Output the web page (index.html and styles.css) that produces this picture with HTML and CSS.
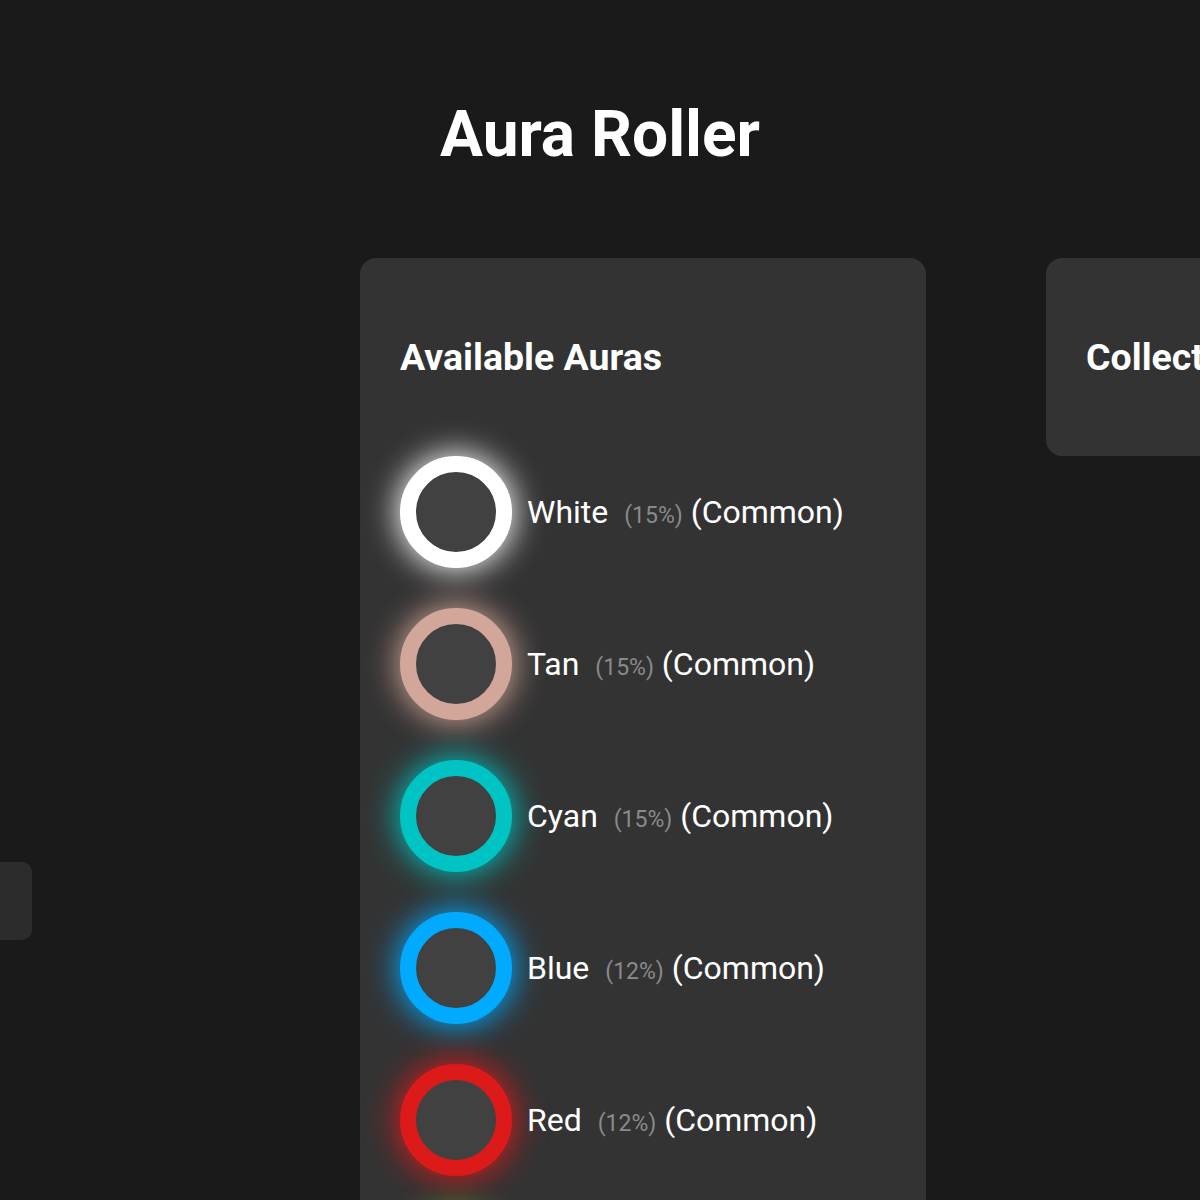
FILE: index.html
```html
<!DOCTYPE html>
<html lang="en">
<head>
    <meta charset="UTF-8">
    <meta name="viewport" content="width=device-width, initial-scale=1.0">
    <title>Aura Roller</title>
    <link rel="stylesheet" href="styles.css">
</head>
<body>
    <h1 class="title">Aura Roller</h1>
    <div class="layout">
        <div class="side">
            <div class="roll-panel"></div>
        </div>
        <div class="card auras">
            <h2>Available Auras</h2>
            <div class="aura-list">
                <div class="aura">
                    <div class="ring" style="--aura: #ffffff"></div>
                    <span class="label">White <span class="chance">(15%)</span> (Common)</span>
                </div>
                <div class="aura">
                    <div class="ring" style="--aura: #d2a699"></div>
                    <span class="label">Tan <span class="chance">(15%)</span> (Common)</span>
                </div>
                <div class="aura">
                    <div class="ring" style="--aura: #00c4c4"></div>
                    <span class="label">Cyan <span class="chance">(15%)</span> (Common)</span>
                </div>
                <div class="aura">
                    <div class="ring" style="--aura: #00aaff"></div>
                    <span class="label">Blue <span class="chance">(12%)</span> (Common)</span>
                </div>
                <div class="aura">
                    <div class="ring" style="--aura: #dd1a1a"></div>
                    <span class="label">Red <span class="chance">(12%)</span> (Common)</span>
                </div>
                <div class="aura">
                    <div class="ring" style="--aura: #7cc83a"></div>
                    <span class="label">Green <span class="chance">(10%)</span> (Common)</span>
                </div>
            </div>
        </div>
        <div class="card collection">
            <h2>Collection</h2>
        </div>
    </div>
</body>
</html>
```

FILE: styles.css
```css
body {
    font-family: Roboto, "Noto Sans", Arial, sans-serif;
    margin: 0;
    padding: 0;
    background-color: #1a1a1a;
    color: #fff;
    overflow: hidden;
}
.title {
    font-size: 64px;
    font-weight: bold;
    text-align: center;
    margin: 99px 0 0;
    line-height: 72px;
}
.layout {
    display: flex;
    align-items: flex-start;
    margin-top: 87px;
}
.side {
    width: 360px;
    flex-shrink: 0;
}
.roll-panel {
    width: 120px;
    height: 78px;
    margin-left: -88px;
    margin-top: 604px;
    background-color: #2c2c2c;
    border-radius: 10px;
}
.card {
    background-color: #333;
    border-radius: 16px;
    padding: 40px;
    box-sizing: border-box;
    flex-shrink: 0;
}
.card h2 {
    font-size: 37.5px;
    font-weight: bold;
    margin: 39px 0 39px;
    line-height: 40px;
}
.auras {
    width: 566px;
}
.collection {
    width: 420px;
    margin-left: 120px;
}
.aura-list {
    display: flex;
    flex-direction: column;
    gap: 40px;
    padding-top: 40px;
}
.aura {
    display: flex;
    align-items: center;
    font-size: 32px;
}
.ring {
    width: 80px;
    height: 80px;
    border: 16px solid var(--aura);
    border-radius: 50%;
    background-color: #414141;
    box-shadow: 0 0 32px 2px var(--aura);
    margin-right: 15px;
    flex-shrink: 0;
}
.label {
    white-space: nowrap;
}
.chance {
    font-size: 23px;
    color: #8a8a8a;
    margin-left: 8px;
}
```
